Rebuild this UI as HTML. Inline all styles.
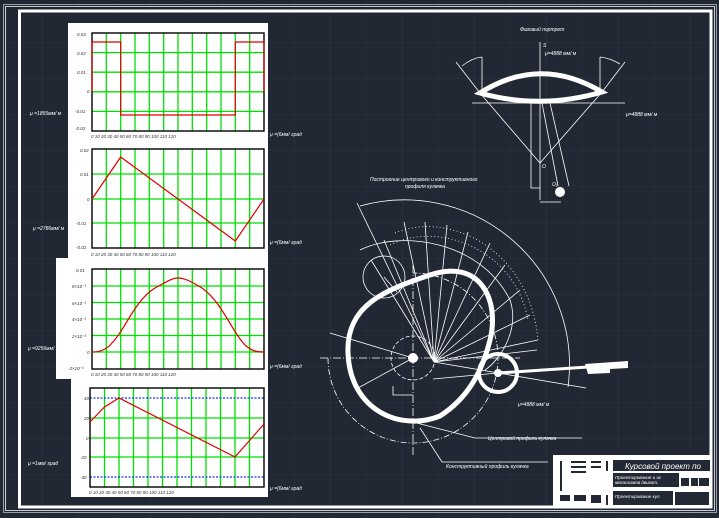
<!DOCTYPE html>
<html><head><meta charset="utf-8"><style>
html,body{margin:0;padding:0;background:#212834;}
svg{display:block}
text{font-family:"Liberation Sans","DejaVu Sans",sans-serif;font-style:italic;fill:#fff}
.d text{fill:#333}
</style></head><body>
<svg width="719" height="518" viewBox="0 0 719 518" xmlns="http://www.w3.org/2000/svg">
<defs>
<pattern id="g" width="36" height="36" patternUnits="userSpaceOnUse" x="6" y="6">
<path d="M0 0H36M0 0V36" stroke="#2c3442" stroke-width="1" fill="none"/>
</pattern>
</defs>
<rect width="719" height="518" fill="#212834"/>
<rect width="719" height="518" fill="url(#g)"/>
<rect x="3.5" y="4.5" width="713" height="508" fill="none" stroke="#9aa0a8" stroke-width="1"/>
<rect x="5.5" y="6.5" width="709" height="504" fill="none" stroke="#c8ccd2" stroke-width="1"/>
<rect x="19.5" y="11" width="691.5" height="496" fill="none" stroke="#fff" stroke-width="3"/>

<rect x="68" y="23" width="200" height="240" fill="#fff"/>
<rect x="56" y="258" width="212" height="121" fill="#fff"/>
<rect x="71" y="378" width="197" height="119" fill="#fff"/>

<g stroke="#00e000" stroke-width="1.3">
<path d="M106.3 33V131M120.7 33V131M135 33V131M149.3 33V131M163.7 33V131M178 33V131M192.3 33V131M206.7 33V131M221 33V131M235.3 33V131M249.7 33V131"/>
<path d="M92 52.6H264M92 72.2H264M92 91.8H264M92 111.4H264"/>
<path d="M106.3 149V248M120.7 149V248M135 149V248M149.3 149V248M163.7 149V248M178 149V248M192.3 149V248M206.7 149V248M221 149V248M235.3 149V248M249.7 149V248"/>
<path d="M92 174H264M92 199H264M92 223H264"/>
<path d="M106.3 269V369M120.7 269V369M135 269V369M149.3 269V369M163.7 269V369M178 269V369M192.3 269V369M206.7 269V369M221 269V369M235.3 269V369M249.7 269V369"/>
<path d="M92 286H264M92 302.5H264M92 319H264M92 335.5H264M92 352H264"/>
<path d="M104.5 388V487M119 388V487M133.5 388V487M148 388V487M162.5 388V487M177 388V487M191.5 388V487M206 388V487M220.5 388V487M235 388V487M249.5 388V487"/>
<path d="M90 418H264M90 438H264M90 457H264"/>
</g>
<g stroke="#1030ff" stroke-width="1.2" stroke-dasharray="2 1.5"><path d="M90 398H264M90 477H264"/></g>
<g fill="none" stroke="#000" stroke-width="1.4">
<rect x="92" y="33" width="172" height="98"/>
<rect x="92" y="149" width="172" height="99"/>
<rect x="92" y="269" width="172" height="100"/>
<rect x="90" y="388" width="174" height="99"/>
</g>
<g fill="none" stroke="#e00000" stroke-width="1.2">
<path d="M92 91.8V42H120.7V115H235.3V42H264V91.8"/>
<path d="M92 199L120.7 157L235.3 241L264 199"/>
<path d="M92 352C100 352 106 350 112 343C125 330 135 300 155 288C168 281 172 278 178 278C185 278 192 282 202 288C222 302 232 332 245 345C252 351 256 352 264 352"/>
<path d="M90 422L104.5 407L119 398L235 457L264 424"/>
</g>
<g class="d" font-size="4.5">
<text x="77" y="36">0.03</text><text x="77" y="55">0.02</text><text x="77" y="74">0.01</text><text x="87" y="93">0</text><text x="75" y="113">-0.01</text><text x="75" y="130">-0.02</text>
<text x="80" y="152">0.02</text><text x="80" y="176">0.01</text><text x="87" y="201">0</text><text x="76" y="225">-0.01</text><text x="76" y="249">-0.02</text>
<text x="76" y="272">0.01</text><text x="72" y="288">8×10⁻³</text><text x="72" y="305">6×10⁻³</text><text x="72" y="321">4×10⁻³</text><text x="72" y="338">2×10⁻³</text><text x="87" y="354">0</text><text x="68" y="370">-2×10⁻³</text>
<text x="84" y="400">40</text><text x="84" y="420">20</text><text x="86" y="440">0</text><text x="80" y="459">-20</text><text x="80" y="479">-40</text>
<text x="91" y="138">0   10   20   30   40   50   60   70   80   90   100  110  120</text>
<text x="91" y="256">0   10   20   30   40   50   60   70   80   90   100  110  120</text>
<text x="91" y="376">0   10   20   30   40   50   60   70   80   90   100  110  120</text>
<text x="89" y="494">0   10   20   30   40   50   60   70   80   90   100  110  120</text>
</g>
<g font-size="5">
<text x="270" y="136">μ =(6мм/ град</text>
<text x="270" y="244">μ =(6мм/ град</text>
<text x="270" y="368">μ =(6мм/ град</text>
<text x="270" y="490">μ =(6мм/ град</text>
<text x="30" y="115">μ =1855мм/ м</text>
<text x="33" y="230">μ =2786мм/ м</text>
<text x="28" y="350">μ =9256мм/ м</text>
<text x="28" y="465">μ =1мм/ град</text>
</g>

<g stroke="#fff" fill="none" stroke-width="0.8">
<path d="M540 42V200M472 103H625"/>
<path d="M480 93L540 163L602 92M480 93L456 62M602 92L625 62M482 93V57M600 92V57"/>
<path d="M462 66Q472 58 482 57M600 57Q610 58 620 64"/>
<path d="M531 103V188H540M542 103L558 186M550 103L569 186"/>
<path d="M540 202H561"/>
</g>
<path d="M480 93Q540 55 602 92Q540 110 480 93Z" fill="none" stroke="#fff" stroke-width="5"/>
<circle cx="560" cy="192" r="5" fill="#fff"/>
<g font-size="5">
<text x="520" y="31">Фазовый портрет</text>
<text x="545" y="55">μ=4888 мм/ м</text>
<text x="626" y="116">μ=4888 мм/ м</text>
<text x="543" y="47">S</text><text x="542" y="168">O</text><text x="552" y="186">O₁</text>
</g>

<g fill="none" stroke="#fff" stroke-width="0.8">
<path d="M360 206A165 165 0 0 1 568 387"/>
<path d="M328 358A85 85 0 1 0 413 273" stroke-dasharray="6 2 1 2"/>
<path d="M320 358H520" stroke-dasharray="8 2 1 2"/>
<path d="M413 265V455" stroke-dasharray="8 2 1 2"/>
<circle cx="413" cy="358" r="22" stroke-dasharray="4 2"/>
<circle cx="384" cy="277" r="21"/>
<path d="M360 250C400 230 480 240 510 300C520 330 500 360 485 370" />
<path d="M390 245C440 220 515 250 528 320" stroke-dasharray="1 2.5"/>
<path d="M395 233C450 210 530 250 538 340" stroke-dasharray="1 2.5"/>
<path d="M357 203L434 362M404 222L434 362M425 222L434 362M447 225L434 362M468 232L434 362M490 243L434 362M505 265L434 362M520 290L434 362M530 315L434 362M538 340L434 362M537 350L434 362M384 240L434 362M371 260L434 362"/>
<path d="M434 362L586 388M433 379L498 373M330 333L413 358M358 388L413 358"/>
<path d="M393 386V395H413"/>
<path d="M420 428L442 462H548M405 420L475 438H582"/>
<path d="M384 277L397 292"/>
</g>
<path d="M348 353C346 305 385 290 430 275C480 258 500 300 490 340C482 372 468 398 440 416C400 432 350 410 348 353Z" fill="none" stroke="#fff" stroke-width="5"/>
<circle cx="498" cy="373" r="19" fill="none" stroke="#fff" stroke-width="4"/>
<circle cx="498" cy="373" r="4" fill="#fff"/>
<path d="M498 373L588 367" stroke="#fff" stroke-width="3"/>
<path d="M585 364L628 361V368L610 369V373L588 374Z" fill="#fff"/>
<circle cx="413" cy="358" r="5" fill="#fff"/>
<g font-size="5">
<text x="370" y="181">Построение центрового и конструктивного</text>
<text x="405" y="188">профиля кулачка</text>
<text x="518" y="406">μ=4888 мм/ м</text>
<text x="488" y="440">Центровой профиль кулачка</text>
<text x="446" y="468">Конструктивный профиль кулачка</text>
</g>

<rect x="553" y="455" width="159" height="53" fill="#fff"/>
<g fill="#222834">
<rect x="613" y="460" width="97" height="11"/>
<rect x="613" y="473" width="66" height="14"/>
<rect x="613" y="491" width="60" height="14"/>
<rect x="675" y="492" width="34" height="13"/>
<rect x="699" y="478" width="10" height="8"/>
<rect x="681" y="478" width="8" height="8"/><rect x="691" y="478" width="7" height="8"/>
<path d="M560 461h2v30h-2zM571 461h15v2h-15zM571 466h15v2h-15zM571 471h15v2h-15zM591 461h10v2h-10zM591 466h10v2h-10zM606 461h2v10h-2zM560 495h10v6h-10zM574 495h12v6h-12zM591 495h10v8h-10zM606 495h2v10h-2z"/>
</g>
<g font-size="8"><text x="625" y="469">Курсовой проект по</text></g>
<g font-size="4.5"><text x="615" y="479">Проектирование и ис</text><text x="615" y="484">механизмов двигат.</text><text x="615" y="498">Проектирование кул</text></g>
</svg>
</body></html>
